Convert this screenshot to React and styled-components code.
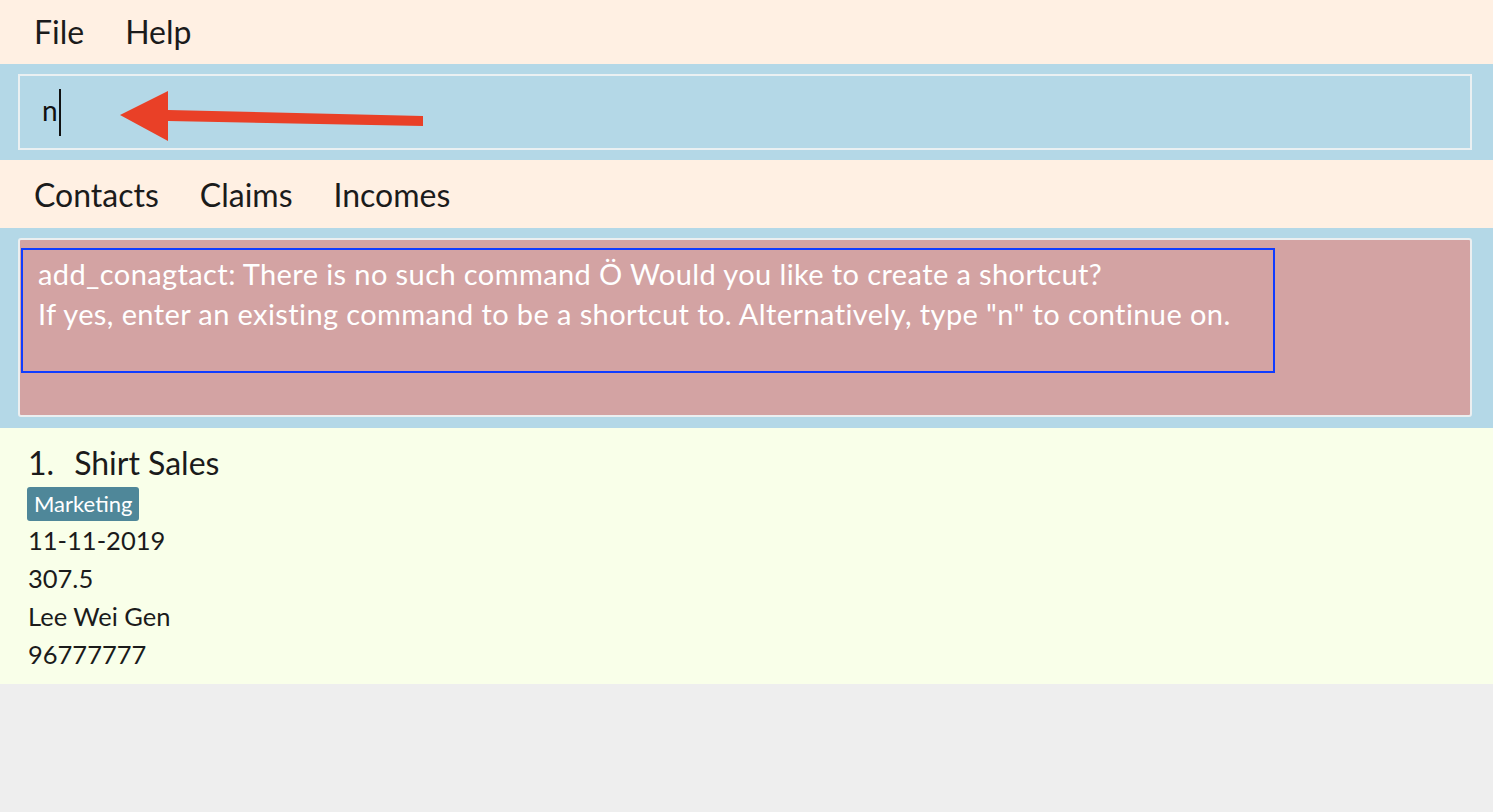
import React from "react";
import styled, { createGlobalStyle } from "styled-components";

const GlobalStyle = createGlobalStyle`
  html, body {
    margin: 0;
    padding: 0;
    background: #eeeeee;
    font-family: Lato, "Open Sans", sans-serif;
  }
`;

const Window = styled.div`
  width: 1493px;
  height: 812px;
  background: #eeeeee;
  display: flex;
  flex-direction: column;
`;

const LinenBar = styled.div`
  background: #fff0e3;
  height: ${(p) => p.height}px;
  display: flex;
  align-items: center;
  padding-left: 34px;
  gap: ${(p) => p.gap}px;
  box-sizing: border-box;
`;

const BarItem = styled.span`
  font-size: 32px;
  color: #1b1b1b;
  line-height: 1;
  margin-top: ${(p) => p.dy || 0}px;
`;

const BlueSection = styled.div`
  background: #b4d8e7;
  padding: 10px 21px 10px 18px;
`;

const CommandBox = styled.div`
  position: relative;
  height: 72px;
  border: 2px solid #eaf0f2;
  display: flex;
  align-items: center;
  padding-left: 22px;
`;

const CommandText = styled.span`
  font-size: 28px;
  color: #111;
  line-height: 1;
  padding-bottom: 4px;
`;

const Caret = styled.span`
  display: inline-block;
  width: 2px;
  height: 47px;
  background: #111;
  margin-left: 1px;
`;

const ArrowOverlay = styled.svg`
  position: absolute;
  left: 80px;
  top: 14px;
  width: 323px;
  height: 52px;
  overflow: visible;
`;

const ResultSection = styled(BlueSection)`
  padding: 10px 21px 11px 18px;
`;

const ResultPanel = styled.div`
  height: 179px;
  background: #d3a3a3;
  border: 2px solid #eceff0;
  border-radius: 3px;
  padding: 8px 0 0 1px;
  box-sizing: border-box;
`;

const ResultBox = styled.div`
  width: 1254px;
  height: 125px;
  box-sizing: border-box;
  border: 2px solid #0f3cff;
  padding: 4px 0 0 15px;
`;

const ResultLine = styled.div`
  font-size: 29px;
  font-weight: 400;
  color: #ffffff;
  line-height: 40px;
  letter-spacing: 0.4px;
`;

const ListSection = styled.div`
  background: #f9ffe9;
  height: 256px;
  padding: 15px 28px 0 28px;
  box-sizing: border-box;
`;

const CardTitle = styled.div`
  font-size: 32px;
  color: #1b1b1b;
  line-height: 40px;
  display: flex;
  gap: 20px;
`;

const Tag = styled.span`
  display: inline-block;
  background: #4f8799;
  color: #ffffff;
  font-size: 22px;
  line-height: 34px;
  padding: 0 7px;
  border-radius: 3px;
  margin: 4px 0 0 -1px;
`;

const Field = styled.div`
  font-size: 25.5px;
  color: #1b1b1b;
  line-height: 38px;
`;

export default function App() {
  return (
    <Window>
      <GlobalStyle />
      <LinenBar height={64} gap={41}>
        <BarItem>File</BarItem>
        <BarItem>Help</BarItem>
      </LinenBar>

      <BlueSection>
        <CommandBox>
          <CommandText>n</CommandText>
          <Caret />
          <ArrowOverlay viewBox="0 0 323 52">
            <polygon points="20,25 68,1 68,20 323,26 323,36 68,31 68,51" fill="#e94027" />
          </ArrowOverlay>
        </CommandBox>
      </BlueSection>

      <LinenBar height={68} gap={41}>
        <BarItem dy={2}>Contacts</BarItem>
        <BarItem dy={2}>Claims</BarItem>
        <BarItem dy={2}>Incomes</BarItem>
      </LinenBar>

      <ResultSection>
        <ResultPanel>
          <ResultBox>
            <ResultLine>
              add_conagtact: There is no such command Ö Would you like to create a shortcut?
            </ResultLine>
            <ResultLine>
              If yes, enter an existing command to be a shortcut to. Alternatively, type "n" to continue on.
            </ResultLine>
          </ResultBox>
        </ResultPanel>
      </ResultSection>

      <ListSection>
        <CardTitle>
          <span>1.</span>
          <span>Shirt Sales</span>
        </CardTitle>
        <Tag>Marketing</Tag>
        <Field>11-11-2019</Field>
        <Field>307.5</Field>
        <Field>Lee Wei Gen</Field>
        <Field>96777777</Field>
      </ListSection>
    </Window>
  );
}
